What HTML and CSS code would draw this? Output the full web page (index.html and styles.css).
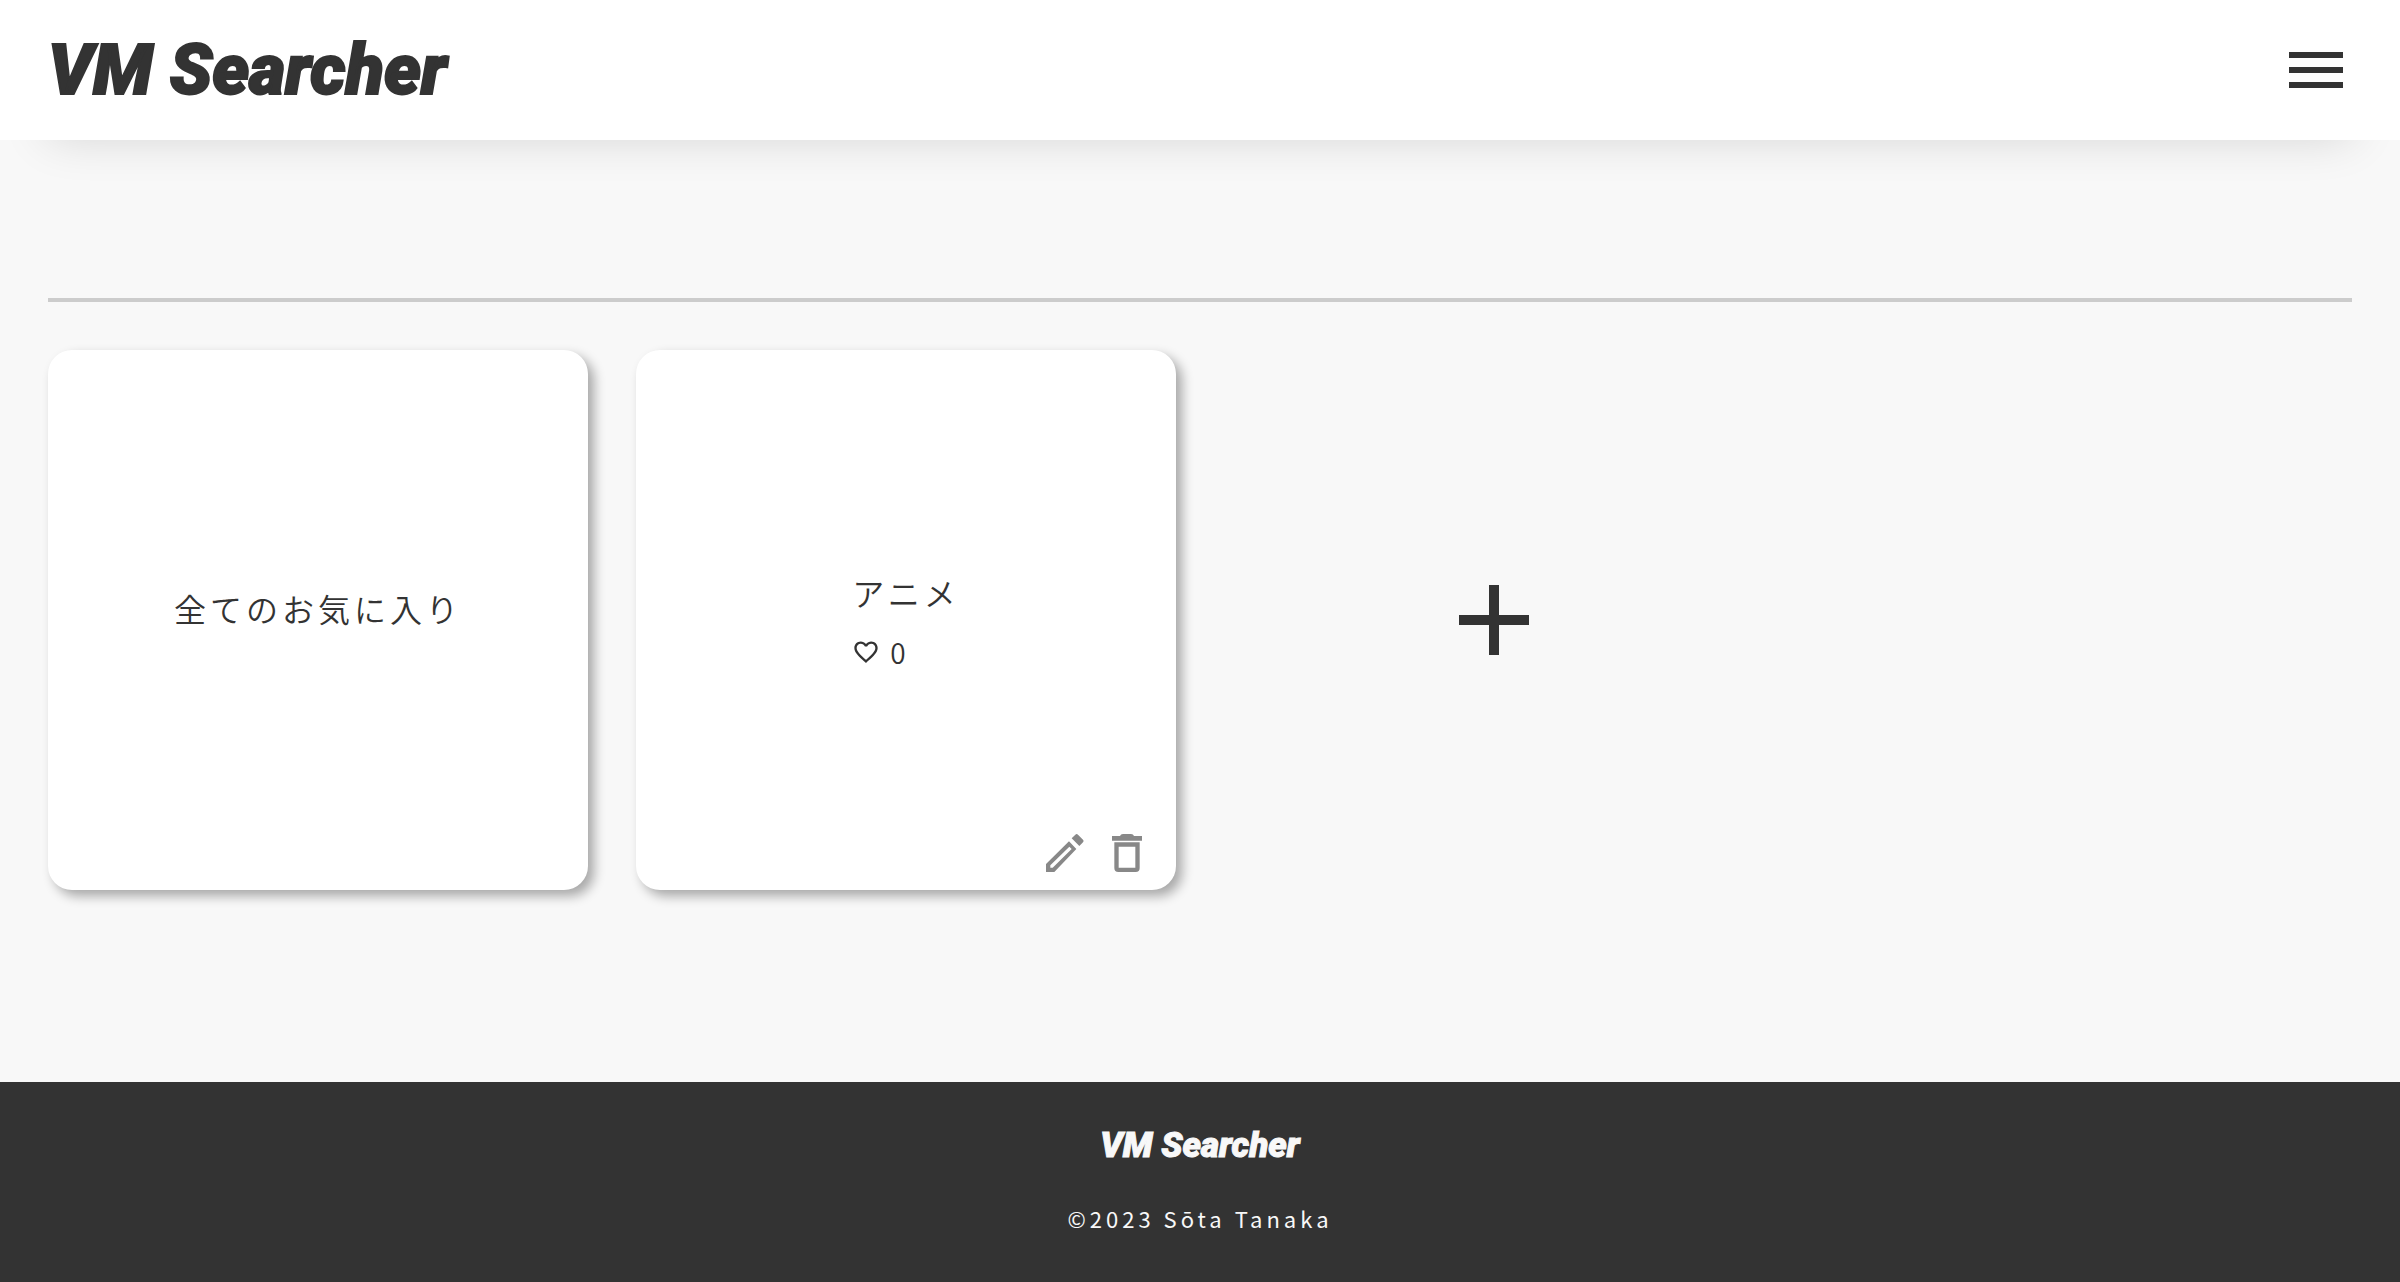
FILE: index.html
```html
<!DOCTYPE html>
<html lang="ja">
<head>
<meta charset="utf-8">
<meta name="viewport" content="width=device-width, initial-scale=1">
<title>VM Searcher</title>
<link rel="stylesheet" href="styles.css">
</head>
<body>
<header class="header">
  <a class="logo" href="#">VM Searcher</a>
  <button class="menu" type="button" aria-label="メニュー">
    <span class="menu-bar"></span>
    <span class="menu-bar"></span>
    <span class="menu-bar"></span>
  </button>
</header>
<main class="main">
  <hr class="divider">
  <ul class="folders">
    <li class="card">
      <a class="card-link" href="#"><span class="card-title">全てのお気に入り</span></a>
    </li>
    <li class="card">
      <a class="card-link" href="#">
        <span class="card-body">
          <span class="card-title">アニメ</span>
          <span class="count">
            <svg class="heart" viewBox="0 0 24 24" aria-hidden="true"><path d="M16.5 3c-1.74 0-3.41.81-4.5 2.09C10.91 3.81 9.24 3 7.5 3 4.42 3 2 5.42 2 8.5c0 3.78 3.4 6.86 8.55 11.54L12 21.35l1.45-1.32C18.6 15.36 22 12.28 22 8.5 22 5.42 19.58 3 16.5 3zm-4.4 15.55l-.1.1-.1-.1C7.14 14.24 4 11.39 4 8.5 4 6.5 5.5 5 7.5 5c1.54 0 3.04.99 3.57 2.36h1.87C13.46 5.99 14.96 5 16.5 5c2 0 3.5 1.5 3.5 3.5 0 2.89-3.14 5.74-7.9 10.05z"/></svg>
            <span>0</span>
          </span>
        </span>
      </a>
      <div class="actions">
        <button class="icon-button" type="button" aria-label="編集">
          <svg viewBox="0 0 120 120" aria-hidden="true"><path fill-rule="evenodd" d="M3 117V93L72 25l22 23-66 69zM16 104h7l57-56-7-7-57 56zM80 16l11-11q4-4 8 0l15 15q4 4 0 8l-11 11z"/></svg>
        </button>
        <button class="icon-button" type="button" aria-label="削除">
          <svg viewBox="0 0 120 120" aria-hidden="true"><path fill-rule="evenodd" d="M15 9h24q2-6 9-6h24q7 0 9 6h24v14H15zM22 28h76v77q0 12-12 12H34q-12 0-12-12zm13 13v63h50V41z"/></svg>
        </button>
      </div>
    </li>
    <li class="add-item">
      <button class="add" type="button" aria-label="フォルダを追加">
        <svg viewBox="0 0 70 70" aria-hidden="true"><path d="M30 0h10v30h30v10H40v30H30V40H0V30h30z"/></svg>
      </button>
    </li>
  </ul>
</main>
<footer class="footer">
  <a class="logo logo-small" href="#">VM Searcher</a>
  <small class="copyright">©2023 Sōta Tanaka</small>
</footer>
</body>
</html>
```
FILE: styles.css
```css
* { box-sizing: border-box; }

body {
  margin: 0;
  min-height: 100vh;
  display: flex;
  flex-direction: column;
  background: #f8f8f8;
  color: #333;
  font-family: "Noto Sans CJK JP", sans-serif;
}

a { color: inherit; text-decoration: none; }

button {
  padding: 0;
  border: 0;
  background: none;
  color: inherit;
  cursor: pointer;
}

svg { display: block; fill: currentColor; }

.header {
  display: flex;
  align-items: center;
  justify-content: space-between;
  height: 140px;
  padding: 0 48px;
  background: #fff;
  box-shadow: 0 44px 48px -48px rgba(0, 0, 0, 0.16);
}

.logo {
  font-family: Roboto, sans-serif;
  font-size: 70px;
  font-weight: 900;
  font-style: italic;
  line-height: 84px;
  -webkit-text-stroke: 2px currentColor;
}

.menu {
  display: flex;
  flex-direction: column;
  justify-content: center;
  align-items: center;
  gap: 9px;
  width: 72px;
  height: 72px;
}

.menu-bar { width: 54px; height: 6px; background: #333; }

.main { flex: 1; padding: 158px 48px 192px; }

.divider { margin: 0; border: 0; height: 4px; background: #ccc; }

.folders {
  display: grid;
  grid-template-columns: repeat(4, 1fr);
  gap: 48px;
  margin: 48px 0 0;
  padding: 0;
  list-style: none;
}

.card {
  position: relative;
  aspect-ratio: 1;
  border-radius: 24px;
  background: #fff;
  box-shadow: 6px 6px 12px rgba(0, 0, 0, 0.33);
}

.card-link {
  display: flex;
  align-items: center;
  justify-content: center;
  height: 100%;
  font-weight: 350;
}

.card-title {
  display: block;
  margin-bottom: 24px;
  font-size: 32px;
  line-height: 40px;
  letter-spacing: 4px;
}

.count {
  display: flex;
  align-items: center;
  gap: 10px;
  font-size: 28px;
  line-height: 32px;
}

.heart { width: 28px; height: 28px; }

.actions {
  position: absolute;
  right: 29px;
  bottom: 17px;
  display: flex;
  gap: 22px;
  color: #888;
}

.icon-button { width: 40px; height: 40px; }

.add-item { display: flex; align-items: center; justify-content: center; }

.add { width: 70px; height: 70px; }

.footer {
  display: flex;
  flex-direction: column;
  align-items: center;
  gap: 28px;
  padding: 44px 48px 40px;
  background: #333;
  color: #f8f8f8;
}

.logo-small {
  font-size: 35px;
  line-height: 40px;
  -webkit-text-stroke-width: 1px;
}

.copyright { font-size: 22px; line-height: 48px; letter-spacing: 4px; }
```
